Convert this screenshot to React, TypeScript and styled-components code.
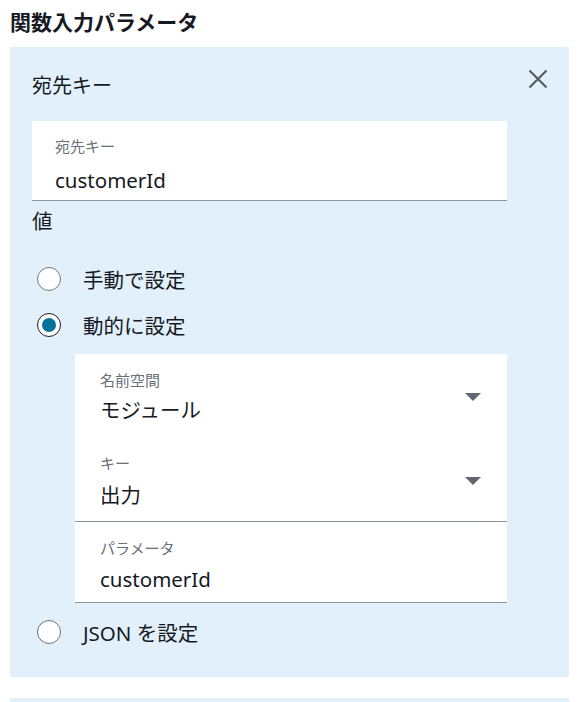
import styled, { createGlobalStyle } from "styled-components";

const GlobalStyle = createGlobalStyle`
    body {
        margin: 0;
        background: #ffffff;
        font-family: "Noto Sans", "Noto Sans CJK JP", sans-serif;
        color: #16191f;
    }
`;

const Page = styled.div`
    width: 586px;
    height: 702px;
    overflow: hidden;
`;

const Title = styled.h2`
    margin: 0;
    padding: 10px 10px 0;
    font-size: 21px;
    line-height: 24px;
    font-weight: 700;
`;

const Panel = styled.section`
    box-sizing: border-box;
    width: 559px;
    margin: 13px 0 0 10px;
    padding: 0 0 22px 22px;
    background: #e1f0fb;
`;

const NextPanel = styled(Panel)`
    margin-top: 21px;
    height: 40px;
`;

const PanelHeader = styled.div`
    display: flex;
    justify-content: space-between;
    height: 74px;
`;

const PanelTitle = styled.div`
    padding-top: 27px;
    font-size: 20px;
    line-height: 24px;
`;

const CloseButton = styled.button`
    width: 20px;
    height: 20px;
    margin: 22px 21px 0 0;
    padding: 0;
    border: 0;
    background: none;
    cursor: pointer;
`;

const Field = styled.div<{ $indent: number; $top: number; $bottom: number }>`
    background: #ffffff;
    border-bottom: 1px solid #8d9499;
    padding: ${(p) => p.$top}px 20px ${(p) => p.$bottom}px ${(p) => p.$indent}px;
`;

const FieldLabel = styled.div`
    font-size: 15px;
    line-height: 20px;
    color: #687078;
`;

const FieldValue = styled.div<{ $gap: number }>`
    margin-top: ${(p) => p.$gap}px;
    font-size: 20.5px;
    line-height: 26px;
`;

const TextBox = styled.div`
    width: 475px;
`;

const SectionLabel = styled.div`
    margin-top: 7px;
    font-size: 20.5px;
    line-height: 26px;
`;

const RadioGroup = styled.div`
    margin-top: 22px;
    width: 475px;
`;

const RadioRow = styled.label`
    display: flex;
    align-items: center;
    height: 46px;
    padding-left: 5px;
    font-size: 20.5px;
    cursor: pointer;
`;

const RadioCircle = styled.span<{ $checked?: boolean }>`
    box-sizing: border-box;
    width: 24px;
    height: 24px;
    margin-right: 22px;
    border-radius: 50%;
    border: 1px solid ${(p) => (p.$checked ? "#16191f" : "#6f767c")};
    background: #ffffff;
    display: flex;
    align-items: center;
    justify-content: center;
    &::after {
        content: "";
        display: ${(p) => (p.$checked ? "block" : "none")};
        width: 14px;
        height: 14px;
        border-radius: 50%;
        background: #06739a;
    }
`;

const Nested = styled.div`
    margin: 6px 0 6px 43px;
    background: #ffffff;
`;

const SelectList = styled.div`
    display: flex;
    flex-direction: column;
    gap: 30px;
    padding: 16px 26px 13px 25px;
    border-bottom: 1px solid #8d9499;
`;

const Select = styled.div`
    display: flex;
    align-items: center;
    justify-content: space-between;
`;

const Caret = styled.span`
    width: 0;
    height: 0;
    border-left: 8.5px solid transparent;
    border-right: 8.5px solid transparent;
    border-top: 8px solid #5f666d;
`;

function Close() {
    return (
        <svg width="20" height="20" viewBox="0 0 20 20">
            <path d="M1.5 1.5 L18.5 18.5 M18.5 1.5 L1.5 18.5" stroke="#545b64" strokeWidth="2.2" fill="none" />
        </svg>
    );
}

function App() {
    return (
        <Page>
            <GlobalStyle />
            <Title>関数入力パラメータ</Title>
            <Panel>
                <PanelHeader>
                    <PanelTitle>宛先キー</PanelTitle>
                    <CloseButton aria-label="閉じる">
                        <Close />
                    </CloseButton>
                </PanelHeader>
                <TextBox>
                    <Field $indent={23} $top={15} $bottom={7}>
                        <FieldLabel>宛先キー</FieldLabel>
                        <FieldValue $gap={11}>customerId</FieldValue>
                    </Field>
                </TextBox>
                <SectionLabel>値</SectionLabel>
                <RadioGroup>
                    <RadioRow>
                        <RadioCircle />
                        手動で設定
                    </RadioRow>
                    <RadioRow>
                        <RadioCircle $checked />
                        動的に設定
                    </RadioRow>
                    <Nested>
                        <SelectList>
                            <Select>
                                <div>
                                    <FieldLabel>名前空間</FieldLabel>
                                    <FieldValue $gap={7}>モジュール</FieldValue>
                                </div>
                                <Caret />
                            </Select>
                            <Select>
                                <div>
                                    <FieldLabel>キー</FieldLabel>
                                    <FieldValue $gap={9}>出力</FieldValue>
                                </div>
                                <Caret />
                            </Select>
                        </SelectList>
                        <Field $indent={25} $top={16} $bottom={10}>
                            <FieldLabel>パラメータ</FieldLabel>
                            <FieldValue $gap={8}>customerId</FieldValue>
                        </Field>
                    </Nested>
                    <RadioRow>
                        <RadioCircle />
                        JSON を設定
                    </RadioRow>
                </RadioGroup>
            </Panel>
            <NextPanel />
        </Page>
    );
}

export default App;
